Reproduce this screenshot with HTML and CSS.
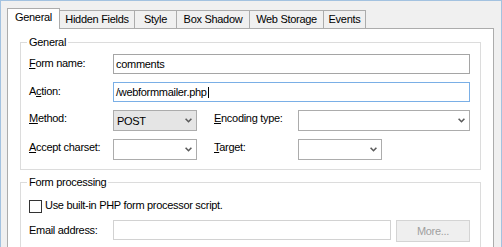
FILE: index.html
```html
<!DOCTYPE html>
<html>
<head>
<meta charset="utf-8">
<title>Form properties</title>
<link rel="stylesheet" href="styles.css">
</head>
<body>
<div class="window">
  <div class="tabs">
    <div class="tab active">General</div>
    <div class="tab w-hidden">Hidden Fields</div>
    <div class="tab w-style">Style</div>
    <div class="tab w-shadow">Box Shadow</div>
    <div class="tab w-storage">Web Storage</div>
    <div class="tab w-events">Events</div>
  </div>
  <div class="panel">
    <fieldset class="group group-general">
      <legend>General</legend>
      <div class="rows">
        <div class="row">
          <label class="lbl lbl-text"><u>F</u>orm name:</label>
          <div class="field field-wide">comments</div>
        </div>
        <div class="row">
          <label class="lbl lbl-text">A<u>c</u>tion:</label>
          <div class="field field-wide focused">/webformmailer.php<span class="caret"></span></div>
        </div>
        <div class="row">
          <label class="lbl lbl-select"><u>M</u>ethod:</label>
          <div class="combo combo-short combo-button"><span>POST</span><svg class="chev" width="7" height="5" viewBox="0 0 7 5"><polyline points="0.6,0.8 3.5,3.7 6.4,0.8" fill="none" stroke="#5a5a5a" stroke-width="1.6"/></svg></div>
          <label class="lbl lbl-select lbl-second"><u>E</u>ncoding type:</label>
          <div class="combo combo-long"><span></span><svg class="chev" width="7" height="5" viewBox="0 0 7 5"><polyline points="0.6,0.8 3.5,3.7 6.4,0.8" fill="none" stroke="#5a5a5a" stroke-width="1.6"/></svg></div>
        </div>
        <div class="row">
          <label class="lbl lbl-select"><u>A</u>ccept charset:</label>
          <div class="combo combo-short"><span></span><svg class="chev" width="7" height="5" viewBox="0 0 7 5"><polyline points="0.6,0.8 3.5,3.7 6.4,0.8" fill="none" stroke="#5a5a5a" stroke-width="1.6"/></svg></div>
          <label class="lbl lbl-select lbl-second"><u>T</u>arget:</label>
          <div class="combo combo-short"><span></span><svg class="chev" width="7" height="5" viewBox="0 0 7 5"><polyline points="0.6,0.8 3.5,3.7 6.4,0.8" fill="none" stroke="#5a5a5a" stroke-width="1.6"/></svg></div>
        </div>
      </div>
    </fieldset>
    <fieldset class="group group-processing">
      <legend>Form processing</legend>
      <div class="rows rows-processing">
        <div class="check-row">
          <span class="checkbox"></span>
          <span class="check-text">Use built-in PHP form processor script.</span>
        </div>
        <div class="row">
          <label class="lbl lbl-email">Email address:</label>
          <div class="field field-email"></div>
          <button class="btn" disabled>More...</button>
        </div>
      </div>
    </fieldset>
  </div>
</div>
</body>
</html>
```
FILE: styles.css
```css
html, body {
  margin: 0;
  padding: 0;
}

body {
  background: #f0f0f0;
  font-family: "Liberation Sans", Arial, sans-serif;
  font-size: 11px;
  letter-spacing: -0.3px;
  color: #000;
}

.window {
  width: 502px;
  height: 247px;
  box-sizing: border-box;
  border: 1px solid #a3c2e0;
  border-bottom: 0;
  padding: 7px 7px 0 6px;
  overflow: hidden;
}

/* tab strip */
.tabs {
  display: flex;
  align-items: flex-end;
  height: 20px;
}

.tab {
  box-sizing: border-box;
  height: 18px;
  border-top: 1px solid #acacac;
  border-right: 1px solid #acacac;
  background: #f0f0f0;
  line-height: 17px;
  text-align: center;
  white-space: nowrap;
}

.tab.active {
  width: 53px;
  height: 21px;
  padding-bottom: 3px;
  margin-bottom: -1px;
  border-left: 1px solid #acacac;
  background: #fff;
  position: relative;
  z-index: 1;
}

.w-hidden { width: 75px; }
.w-style { width: 42px; }
.w-shadow { width: 73px; }
.w-storage { width: 74px; }
.w-events { width: 42px; }

/* tab page */
.panel {
  box-sizing: border-box;
  height: 260px;
  background: #fff;
  border: 1px solid #acacac;
}

.group {
  margin: 7px 12px 0 12px;
  border: 1px solid #dcdcdc;
  padding: 0 10px 9px 8px;
  min-width: 0;
}

.group-processing {
  margin-top: 6px;
}

.group legend {
  line-height: 13px;
  padding: 0 2px;
  margin-left: -2px;
}

.rows {
  display: flex;
  flex-direction: column;
  gap: 8px;
  padding-top: 5px;
}

.rows-processing {
  padding-top: 11px;
  gap: 7px;
}

.row {
  display: flex;
  align-items: flex-start;
}

.lbl {
  width: 84px;
  flex: none;
  white-space: nowrap;
}

.lbl-text { line-height: 19px; }
.lbl-select { line-height: 17px; }
.lbl-email { line-height: 20px; }
.lbl-second { margin-left: 17px; }

.lbl u {
  text-decoration: underline;
  text-underline-offset: 1px;
}

/* text boxes */
.field {
  box-sizing: border-box;
  height: 20px;
  border: 1px solid #a5a5a5;
  background: #fff;
  padding: 0 2px;
  line-height: 18px;
  white-space: nowrap;
}

.field-wide { width: 357px; }

.field.focused { border-color: #7aafe6; }

.field-email {
  width: 278px;
  border-color: #d2d2d2;
  margin-right: 5px;
}

.caret {
  display: inline-block;
  width: 1px;
  height: 11px;
  background: #000;
  margin-left: 1px;
  vertical-align: -2px;
}

/* combo boxes */
.combo {
  box-sizing: border-box;
  height: 21px;
  border: 1px solid #acacac;
  background: #fff;
  display: flex;
  align-items: center;
  justify-content: space-between;
  padding: 0 4px 0 3px;
}

.combo-button { background: #e5e5e5; }
.combo-short { width: 84px; }
.combo-long { width: 172px; }

.chev {
  display: block;
  flex: none;
}

/* checkbox */
.check-row {
  display: flex;
  align-items: flex-start;
  gap: 3px;
  height: 13px;
}

.checkbox {
  box-sizing: border-box;
  width: 13px;
  height: 13px;
  border: 1px solid #333;
  background: #fff;
  flex: none;
}

.check-text {
  line-height: 10px;
  white-space: nowrap;
}

/* button */
.btn {
  box-sizing: border-box;
  width: 74px;
  height: 22px;
  border: 1px solid #d4d4d4;
  background: #efefef;
  color: #a0a0a0;
  font: inherit;
  letter-spacing: -0.3px;
  padding: 0;
  flex: none;
}
```
